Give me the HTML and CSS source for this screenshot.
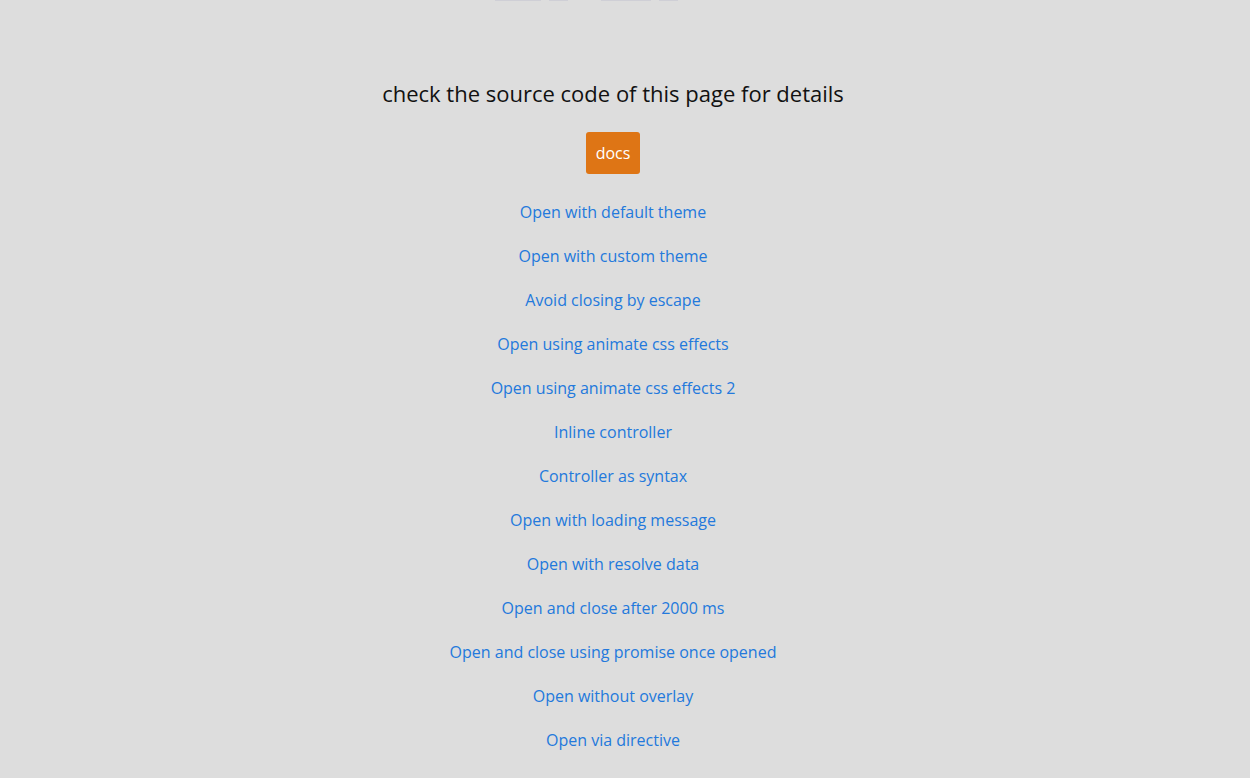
FILE: index.html
```html
<!DOCTYPE html>
<html>
<head>
<meta charset="utf-8">
<link rel="stylesheet" href="styles.css">
</head>
<body>
<div class="wrap">
  <div class="topbar">
    <span class="tab t1"></span>
    <span class="tab t2"></span>
    <span class="tab t3"></span>
    <span class="tab t4"></span>
  </div>
  <main class="page">
    <h1 class="title">check the source code of this page for details</h1>
    <a class="docs" href="#">docs</a>
    <nav class="links">
      <a href="#">Open with default theme</a>
      <a href="#">Open with custom theme</a>
      <a href="#">Avoid closing by escape</a>
      <a href="#">Open using animate css effects</a>
      <a href="#">Open using animate css effects 2</a>
      <a href="#">Inline controller</a>
      <a href="#">Controller as syntax</a>
      <a href="#">Open with loading message</a>
      <a href="#">Open with resolve data</a>
      <a href="#">Open and close after 2000 ms</a>
      <a href="#">Open and close using promise once opened</a>
      <a href="#">Open without overlay</a>
      <a href="#">Open via directive</a>
      <a href="#">Open via directive and close previous</a>
    </nav>
  </main>
</div>
</body>
</html>
```

FILE: styles.css
```css
html, body {
  margin: 0;
  padding: 0;
  background: #dddddd;
  font-family: "Open Sans", "Noto Sans", sans-serif;
  overflow: hidden;
}
.wrap {
  width: 1226px;
}
.topbar {
  display: flex;
  justify-content: center;
  height: 1px;
}
.tab {
  display: block;
  height: 1px;
  background: #cfcfd6;
}
.t1 { width: 46px; margin-left: -54px; }
.t2 { width: 19px; margin-left: 8px; }
.t3 { width: 50px; margin-left: 33px; }
.t4 { width: 19px; margin-left: 8px; }
.page {
  display: flex;
  flex-direction: column;
  align-items: center;
  text-align: center;
}
.title {
  margin: 77px 0 0;
  font-size: 22px;
  font-weight: 400;
  line-height: 30px;
  color: #111111;
}
.docs {
  margin-top: 24px;
  display: block;
  background: #de7515;
  color: #ffffff;
  text-decoration: none;
  font-size: 16px;
  line-height: 22px;
  padding: 10px 9.5px;
  border-radius: 3px;
}
.links {
  display: flex;
  flex-direction: column;
  align-items: center;
  margin-top: 16px;
}
.links a {
  display: block;
  color: #2379dc;
  text-decoration: none;
  font-size: 16px;
  line-height: 24px;
  padding: 10px 0;
}
```
